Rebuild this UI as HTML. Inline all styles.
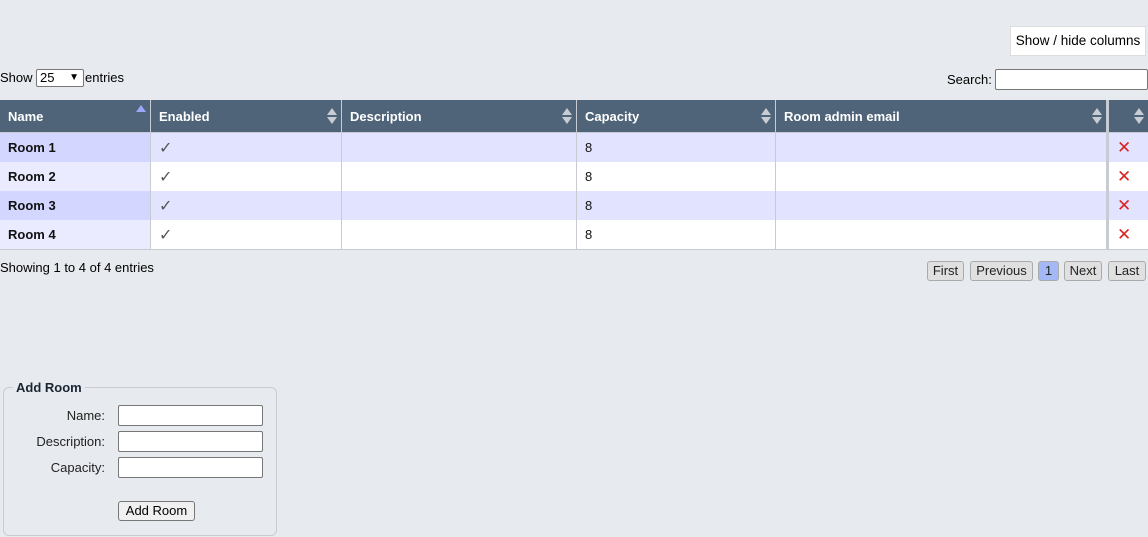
<!DOCTYPE html>
<html><head><style>
body{margin:0;width:1148px;height:537px;background:#e7eaee;font-family:"Liberation Sans",sans-serif;font-size:13px;color:#000;position:relative;overflow:hidden}
.a{position:absolute}
.btn{position:absolute;border:1px solid #aaa;border-radius:3px;background:#e0e0e0;height:18px;line-height:18px;font-size:13px;text-align:center;color:#222}
.inp{position:absolute;background:#fff;border:1px solid #777;border-radius:2px}
table{position:absolute;left:0;top:100px;border-collapse:collapse;width:1148px}
th{background:#4f6478;color:#fff;font-weight:bold;text-align:left;height:32px;padding:0 8px;border-left:1px solid #c8ccd2;border-bottom:1px solid #c8ccd2;font-size:13px;position:relative}
td{height:29px;padding:0 8px;border-left:1px solid #c8ccd2;font-size:13px;color:#111}
tr.o td{background:#e2e4ff}tr.e td{background:#fff}
tr.o td.f{background:#d3d6ff;font-weight:bold}tr.e td.f{background:#eaebff;font-weight:bold}
.s{position:absolute;right:4px;top:7px;width:10px;height:18px}
.ck{color:#555;font-size:16px}
</style></head><body>
<div class="a" style="left:1010px;top:26px;width:134px;height:28px;background:#fff;border:1px solid #ddd;line-height:28px;text-align:center;font-size:13.5px">Show / hide columns</div>
<div class="a" style="left:0;top:70px">Show</div>
<div class="inp" style="left:36px;top:69px;width:43px;height:16px;line-height:16px;font-size:13px;padding-left:3px">25 <span style="position:absolute;right:4px;font-size:10px">&#9660;</span></div>
<div class="a" style="left:85px;top:70px">entries</div>
<div class="a" style="left:947px;top:72px">Search:</div>
<div class="inp" style="left:995px;top:69px;width:151px;height:19px"></div>
<table>
<tr><th style="width:134px;border-left:none">Name<svg class="s" viewBox="0 0 10 18" style="top:4px"><path d="M0 8L5 1L10 8Z" fill="#9ea6f8"/></svg></th>
<th style="width:174px">Enabled<svg class="s" viewBox="0 0 10 18"><path d="M0 8L5 1L10 8ZM0 10L5 17L10 10Z" fill="#c8cdd4"/></svg></th>
<th style="width:218px">Description<svg class="s" viewBox="0 0 10 18"><path d="M0 8L5 1L10 8ZM0 10L5 17L10 10Z" fill="#c8cdd4"/></svg></th>
<th style="width:182px">Capacity<svg class="s" viewBox="0 0 10 18"><path d="M0 8L5 1L10 8ZM0 10L5 17L10 10Z" fill="#c8cdd4"/></svg></th>
<th style="width:314px">Room admin email<svg class="s" viewBox="0 0 10 18"><path d="M0 8L5 1L10 8ZM0 10L5 17L10 10Z" fill="#c8cdd4"/></svg></th>
<th style="border-left:3px solid #c8ccd2"><svg class="s" viewBox="0 0 10 18"><path d="M0 8L5 1L10 8ZM0 10L5 17L10 10Z" fill="#c8cdd4"/></svg></th></tr>
<tr class="o"><td class="f" style="border-left:none">Room 1</td><td class="ck">✓</td><td></td><td>8</td><td></td><td style="border-left:3px solid #c8ccd2;color:#d22;font-size:17px">✕</td></tr>
<tr class="e"><td class="f" style="border-left:none">Room 2</td><td class="ck">✓</td><td></td><td>8</td><td></td><td style="border-left:3px solid #c8ccd2;color:#d22;font-size:17px">✕</td></tr>
<tr class="o"><td class="f" style="border-left:none">Room 3</td><td class="ck">✓</td><td></td><td>8</td><td></td><td style="border-left:3px solid #c8ccd2;color:#d22;font-size:17px">✕</td></tr>
<tr class="e" style="border-bottom:1px solid #c8ccd2"><td class="f" style="border-left:none">Room 4</td><td class="ck">✓</td><td></td><td>8</td><td></td><td style="border-left:3px solid #c8ccd2;color:#d22;font-size:17px">✕</td></tr>
</table>
<div class="a" style="left:0;top:260px">Showing 1 to 4 of 4 entries</div>
<div class="btn" style="left:927px;top:261px;width:35px">First</div>
<div class="btn" style="left:970px;top:261px;width:61px">Previous</div>
<div class="btn" style="left:1038px;top:261px;width:19px;background:#a4b8f6">1</div>
<div class="btn" style="left:1064px;top:261px;width:36px">Next</div>
<div class="btn" style="left:1108px;top:261px;width:36px">Last</div>
<div class="a" style="left:3px;top:387px;width:272px;height:147px;border:1px solid #c8ccd2;border-radius:6px"></div>
<div class="a" style="left:13px;top:380px;background:#e7eaee;padding:0 3px;font-weight:bold;color:#1a2533">Add Room</div>
<div class="a" style="left:0;top:408px;width:105px;text-align:right;color:#222">Name:</div>
<div class="a" style="left:0;top:434px;width:105px;text-align:right;color:#222">Description:</div>
<div class="a" style="left:0;top:460px;width:105px;text-align:right;color:#222">Capacity:</div>
<div class="inp" style="left:118px;top:405px;width:143px;height:19px"></div>
<div class="inp" style="left:118px;top:431px;width:143px;height:19px"></div>
<div class="inp" style="left:118px;top:457px;width:143px;height:19px"></div>
<div class="btn" style="left:118px;top:501px;width:75px;background:#f0f0f0;border-color:#777;color:#000">Add Room</div>
</body></html>
